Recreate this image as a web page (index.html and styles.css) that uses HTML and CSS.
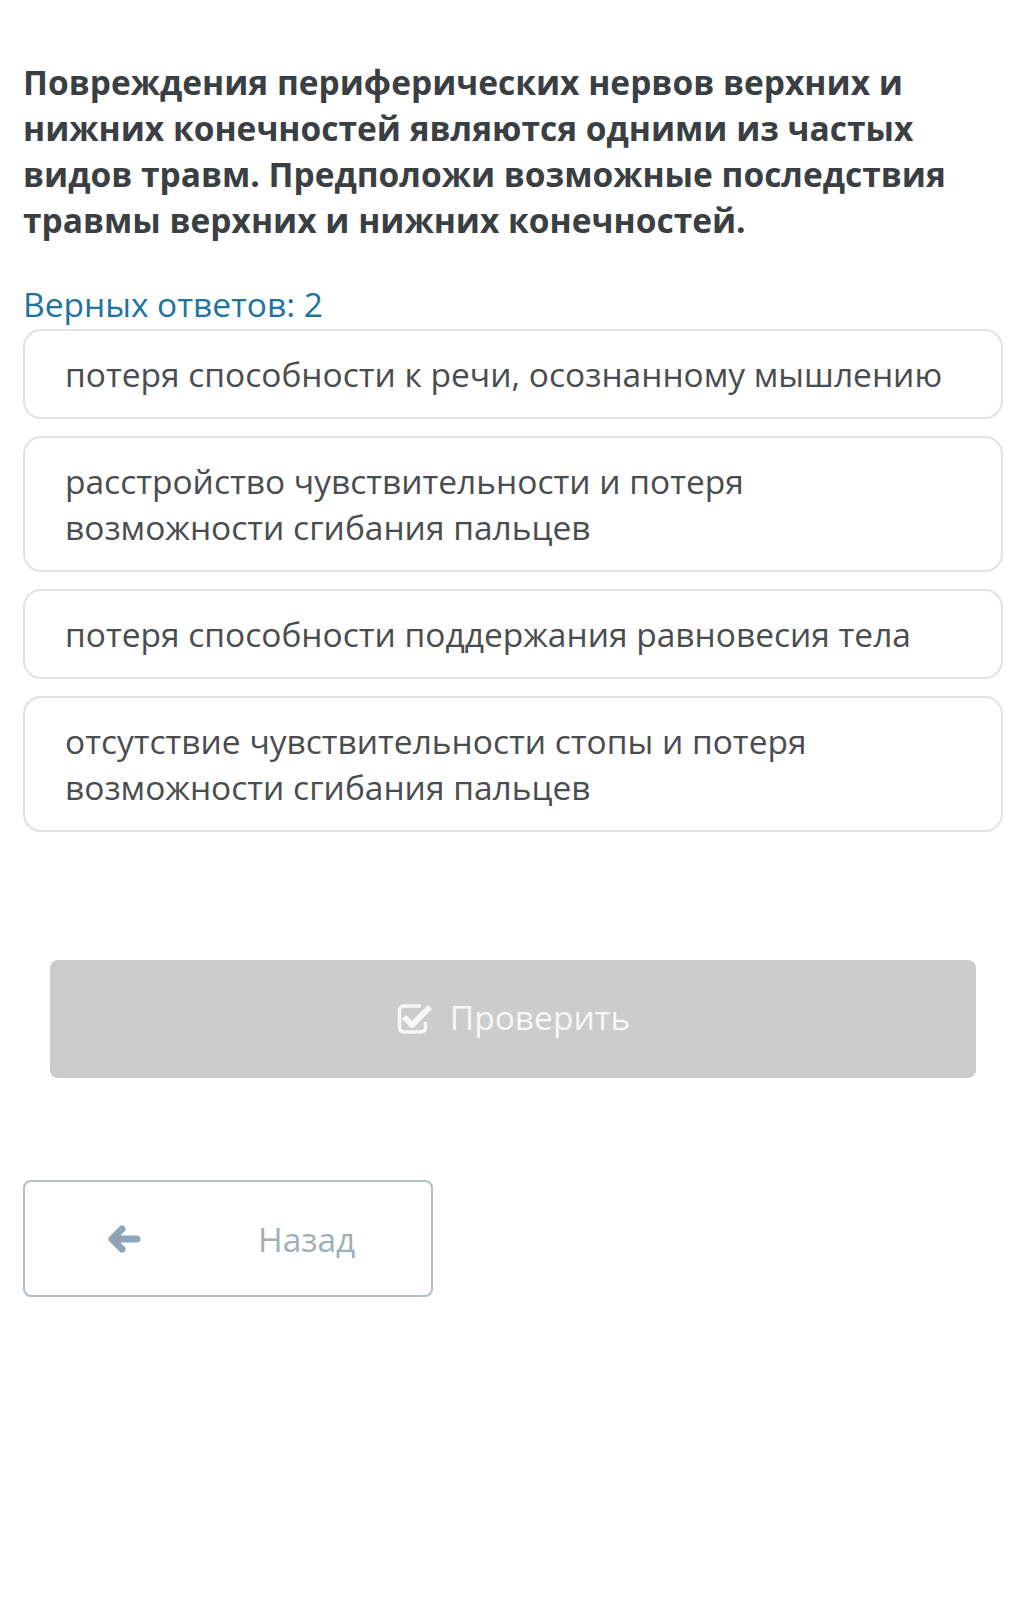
FILE: index.html
```html
<!DOCTYPE html>
<html lang="ru">
<head>
    <meta charset="UTF-8">
    <meta name="viewport" content="width=device-width, initial-scale=1.0">
    <title>Верных ответов: 2</title>
    <link rel="stylesheet" href="styles.css">
</head>
<body>

    <div class="task">
        <h1 class="question">Повреждения периферических нервов верхних и нижних конечностей являются одними из частых видов травм. Предположи возможные последствия травмы верхних и нижних конечностей.</h1>

        <p class="answers-count">Верных ответов: 2</p>

        <div class="options">
            <div class="option">потеря способности к речи, осознанному мышлению</div>
            <div class="option">расстройство чувствительности и потеря<br>возможности сгибания пальцев</div>
            <div class="option">потеря способности поддержания равновесия тела</div>
            <div class="option">отсутствие чувствительности стопы и потеря<br>возможности сгибания пальцев</div>
        </div>

        <button class="check-btn" disabled>
            <svg class="check-icon" width="38" height="32" viewBox="0 0 38 32">
                <path d="M25 3 H8 a4.5 4.5 0 0 0 -4.5 4.5 V24.5 a4.5 4.5 0 0 0 4.5 4.5 H25 a4.5 4.5 0 0 0 4.5 -4.5 V19" fill="none" stroke="#f7f7f7" stroke-width="3.5"/>
                <path d="M8 14 L16 22 L34 4" fill="none" stroke="#f7f7f7" stroke-width="6" stroke-linejoin="round"/>
            </svg>
            <span>Проверить</span>
        </button>

        <button class="back-btn">
            <svg class="back-icon" width="34" height="30" viewBox="0 0 34 30">
                <path d="M30 15 H6 M15 5 L5 15 L15 25" fill="none" stroke="#8fa5b7" stroke-width="7" stroke-linecap="round" stroke-linejoin="round"/>
            </svg>
            <span>Назад</span>
        </button>
    </div>

</body>
</html>
```

FILE: styles.css
```css
body {
    margin: 0;
    background: #ffffff;
    font-family: "Open Sans", "Noto Sans", sans-serif;
}

.task {
    padding: 59px 24px 80px 23px;
}

.question {
    margin: 0;
    font-size: 33.5px;
    line-height: 46px;
    font-weight: 700;
    color: #3a3f44;
}

.answers-count {
    margin: 43px 0 7px 0;
    font-size: 33.5px;
    line-height: 36px;
    color: #1e74a0;
}

.options {
    display: flex;
    flex-direction: column;
    gap: 17px;
}

.option {
    border: 2px solid #e2e2e2;
    border-radius: 18px;
    padding: 20px 20px 20px 40px;
    font-size: 33.5px;
    line-height: 46px;
    color: #4a4d50;
}

.check-btn {
    display: flex;
    align-items: center;
    justify-content: center;
    gap: 16px;
    width: calc(100% - 54px);
    height: 118px;
    margin: 128px 27px 0 27px;
    background: #cccccc;
    border: none;
    border-radius: 8px;
    font-family: inherit;
    font-size: 33.5px;
    color: #f7f7f7;
    padding: 0 0 4px 0;
}

.check-icon {
    margin-top: 4px;
}

.back-btn {
    display: flex;
    align-items: center;
    width: 410px;
    height: 117px;
    margin-top: 102px;
    padding: 0 0 0 82px;
    background: #ffffff;
    border: 2px solid #b4bec5;
    border-radius: 8px;
    font-family: inherit;
    font-size: 33.5px;
    color: #9fb0bb;
}

.back-icon {
    margin-right: 117px;
}
```
